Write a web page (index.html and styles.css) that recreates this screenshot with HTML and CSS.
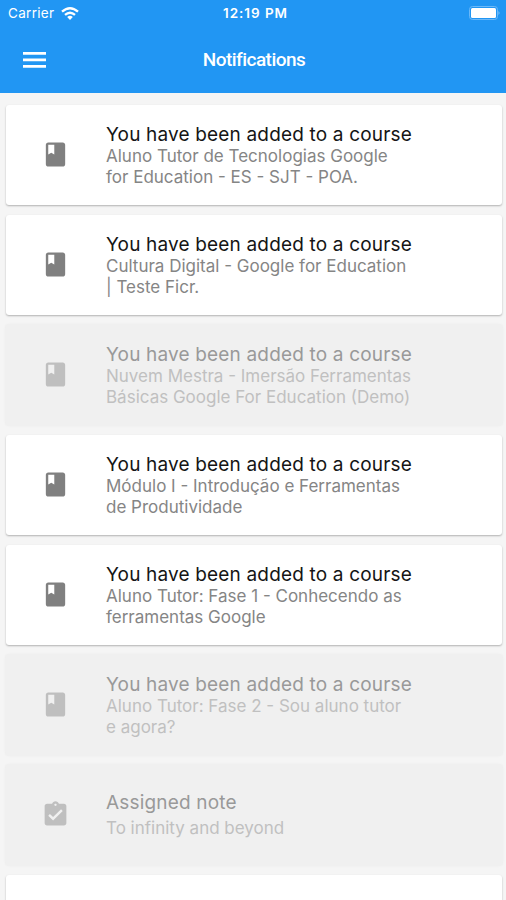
FILE: index.html
```html
<!DOCTYPE html>
<html lang="pt">
<head>
<meta charset="utf-8">
<title>Notifications</title>
<link rel="stylesheet" href="styles.css">
</head>
<body>
<svg class="defs" width="0" height="0">
<symbol id="book" viewBox="0 0 24 24"><path d="M18 2H6c-1.100 0-2 .9-2 2v16c0 1.100.9 2 2 2h12c1.100 0 2-.9 2-2V4c0-1.100-.9-2-2-2zM6 4h5v8l-2.500-1.500L6 12V4z"/></symbol>
</svg>
<header class="top">
<div class="status">
<div class="carrier"><span>Carrier</span><svg class="wifi" viewBox="0 0 18 13"><path fill="none" stroke="#fff" stroke-width="2.300" d="M1 4.700Q9-2.300 17 4.700M4 7.900Q9 3.500 14 7.900"/><path fill="#fff" d="M6.200 10Q9 7.600 11.800 10L9 13z"/></svg></div>
<span class="time">12:19 PM</span>
<svg class="battery" viewBox="0 0 32 14"><rect x=".5" y=".5" width="28" height="13" rx="3" fill="none" stroke="#6bb8f8"/><rect x="2" y="2" width="25" height="10" rx="1.500" fill="#fff"/><path d="M29.500 5q2 2 0 4z" fill="#8ac6fa"/></svg>
</div>
<div class="bar">
<svg class="menu" viewBox="0 0 23 16"><path fill="#fff" d="M0 0h23v2.700H0zM0 6.500h23v2.700H0zM0 13h23v2.700H0z"/></svg>
<h1><span>Notifications</span></h1>
</div>
</header>
<main class="list">
<article class="card"><svg class="icon"><use href="#book"/></svg><div class="text"><h2><span>You have been added to a course</span></h2><p><span>Aluno Tutor de Tecnologias Google</span><br><span>for Education - ES - SJT - POA.</span></p></div></article>
<article class="card"><svg class="icon"><use href="#book"/></svg><div class="text"><h2><span>You have been added to a course</span></h2><p><span>Cultura Digital - Google for Education</span><br><span>| Teste Ficr.</span></p></div></article>
<article class="card read"><svg class="icon"><use href="#book"/></svg><div class="text"><h2><span>You have been added to a course</span></h2><p><span>Nuvem Mestra - Imersão Ferramentas</span><br><span>Básicas Google For Education (Demo)</span></p></div></article>
<article class="card"><svg class="icon"><use href="#book"/></svg><div class="text"><h2><span>You have been added to a course</span></h2><p><span>Módulo I - Introdução e Ferramentas</span><br><span>de Produtividade</span></p></div></article>
<article class="card"><svg class="icon"><use href="#book"/></svg><div class="text"><h2><span>You have been added to a course</span></h2><p><span>Aluno Tutor: Fase 1 - Conhecendo as</span><br><span>ferramentas Google</span></p></div></article>
<article class="card read"><svg class="icon"><use href="#book"/></svg><div class="text"><h2><span>You have been added to a course</span></h2><p><span>Aluno Tutor: Fase 2 - Sou aluno tutor</span><br><span>e agora?</span></p></div></article>
<article class="card read note"><svg class="icon" viewBox="0 0 24 24"><path d="M19 3h-4.180C14.400 1.840 13.300 1 12 1s-2.400.84-2.820 2H5c-1.100 0-2 .9-2 2v14c0 1.100.9 2 2 2h14c1.100 0 2-.9 2-2V5c0-1.100-.9-2-2-2zm-7 0c.55 0 1 .45 1 1s-.45 1-1 1-1-.45-1-1 .45-1 1-1zm-2 14l-4-4 1.410-1.410L10 14.170l6.590-6.590L18 9l-8 8z"/></svg><div class="text"><h2><span>Assigned note</span></h2><p><span>To infinity and beyond</span></p></div></article>
<article class="card last"></article>
</main>
</body>
</html>
```
FILE: styles.css
```css
* { box-sizing: border-box; }
body { margin: 0; height: 900px; overflow: hidden; background: #f5f5f5; font-family: Inter, "Liberation Sans", sans-serif; }
.defs { display: block; }
.top { height: 93px; background: #2196f3; color: #fff; }
.status { height: 26px; display: grid; grid-template-columns: 1fr auto 1fr; align-items: center; padding: 0 4px 0 8px; font-size: 13.500px; }
.carrier { display: flex; align-items: center; gap: 7px; letter-spacing: .3px; }
.wifi { width: 18px; height: 13px; }
.time { font-weight: 600; font-size: 13.500px; letter-spacing: .95px; margin-right: -1px; }
.battery { width: 32px; height: 14px; justify-self: end; margin-right: 1px; }
.bar { height: 67px; display: grid; grid-template-columns: 60px 1fr 60px; align-items: center; }
.menu { width: 23px; height: 16px; margin-left: 23px; }
h1 { margin: 0; padding-left: 2px; font: 500 19px/24px Roboto, sans-serif; text-align: center; letter-spacing: -.53px; }
.list { height: 807px; overflow: hidden; padding: 12px 4px 0 6px; display: flex; flex-direction: column; gap: 10px; }
.card { flex: 0 0 100px; background: #fff; border-radius: 3px; box-shadow: 0 1px 2px rgba(0,0,0,.28); display: flex; padding: 19px 0 0 35px; }
.icon { width: 29px; height: 29px; margin: 16px 36px 0 0; fill: #808080; }
h2 { margin: 0; font-size: 19px; font-weight: 400; line-height: 22px; letter-spacing: .17px; color: #151515; white-space: nowrap; }
p { margin: 0; font-size: 17px; line-height: 21px; color: #858585; white-space: nowrap; }
.read { background: #f0f0f0; box-shadow: 0 0 0 1px #f0f0f0, 0 0 2px 1px #ededed; }
.read h2 { color: #999; }
.read p { color: #c0c0c0; }
.read .icon { fill: #bfbfbf; }
.note h2 { margin-top: 8px; }
.note p { margin-top: 4px; }
.last { flex-basis: 25px; border-radius: 3px 3px 0 0; }
```
